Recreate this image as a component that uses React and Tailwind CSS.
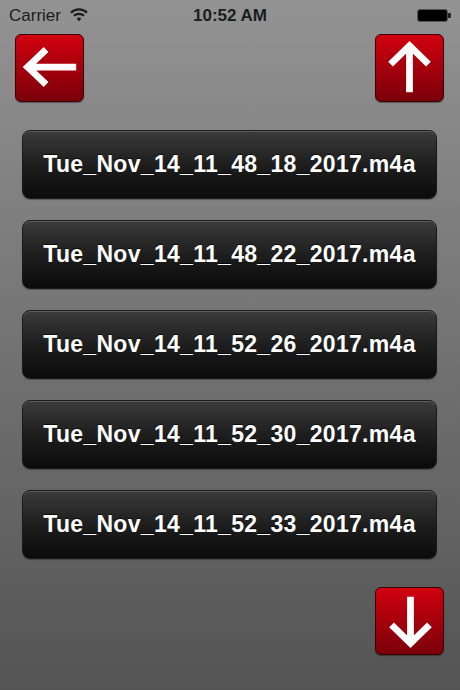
import React from "react";

const files = [
  "Tue_Nov_14_11_48_18_2017.m4a",
  "Tue_Nov_14_11_48_22_2017.m4a",
  "Tue_Nov_14_11_52_26_2017.m4a",
  "Tue_Nov_14_11_52_30_2017.m4a",
  "Tue_Nov_14_11_52_33_2017.m4a",
];

function RedButton({ children }) {
  return (
    <div className="w-[69px] h-[68px] rounded-[6px] border border-[#3a0004] bg-gradient-to-b from-[#d2000f] to-[#7a0008] shadow-[0_1px_1px_rgba(0,0,0,0.35)] flex items-center justify-center">
      <svg width="69" height="68" viewBox="0 0 69 68">
        {children}
      </svg>
    </div>
  );
}

function Wifi() {
  return (
    <svg width="18" height="14" viewBox="0 0 18 14" className="ml-[9px]">
      <path d="M1 4.6 A11.5 11.5 0 0 1 17 4.6" fill="none" stroke="#1c1c1c" strokeWidth="2.2" />
      <path d="M4 7.8 A7.2 7.2 0 0 1 14 7.8" fill="none" stroke="#1c1c1c" strokeWidth="2.2" />
      <path d="M6.6 10.6 A3.4 3.4 0 0 1 11.4 10.6 L9 13.2 Z" fill="#1c1c1c" />
    </svg>
  );
}

export default function App() {
  return (
    <div className="w-[460px] h-[690px] overflow-hidden bg-gradient-to-b from-[#939393] to-[#545454] flex flex-col" style={{ fontFamily: '"Liberation Sans", Arial, sans-serif' }}>
      <div className="h-[30px] relative flex items-center px-[9px]">
        <span className="text-[17px] text-[#1c1c1c] leading-none">Carrier</span>
        <Wifi />
        <span className="absolute left-0 right-0 text-center text-[17px] font-bold text-[#1c1c1c] leading-none">10:52 AM</span>
        <div className="ml-auto flex items-center">
          <div className="w-[31px] h-[13px] rounded-[3px] bg-black border border-[#555]" />
          <div className="w-[3px] h-[5px] bg-[#222] rounded-r-[1px]" />
        </div>
      </div>

      <div className="mt-[4px] flex justify-between pl-[15px] pr-[16px]">
        <RedButton>
          <path d="M62 33 L12 33 M31 15 L12 33 L31 51" fill="none" stroke="white" strokeWidth="7" strokeLinejoin="miter" strokeMiterlimit="10" />
        </RedButton>
        <RedButton>
          <path d="M34.5 59 L34.5 11 M15 30 L34.5 11 L54 30" fill="none" stroke="white" strokeWidth="7" strokeLinejoin="miter" strokeMiterlimit="10" />
        </RedButton>
      </div>

      <div className="mt-[28px] flex flex-col gap-[21px] pl-[22px] pr-[23px]">
        {files.map((f) => (
          <div key={f} className="h-[69px] rounded-[8px] border border-[#1a1a1a] bg-gradient-to-b from-[#3b3b3b] via-[#1e1e1e] to-[#0b0b0b] shadow-[inset_0_1px_0_rgba(255,255,255,0.18),0_1px_1px_rgba(0,0,0,0.3)] flex items-center justify-center">
            <span className="text-white font-bold text-[23px] tracking-[0.3px] [text-shadow:0_-1px_0_rgba(0,0,0,0.7)]">{f}</span>
          </div>
        ))}
      </div>

      <div className="mt-[28px] flex justify-end pr-[16px]">
        <RedButton>
          <path d="M35.5 9 L35.5 57 M16 38 L35.5 57 L55 38" fill="none" stroke="white" strokeWidth="7" strokeLinejoin="miter" strokeMiterlimit="10" />
        </RedButton>
      </div>
    </div>
  );
}
